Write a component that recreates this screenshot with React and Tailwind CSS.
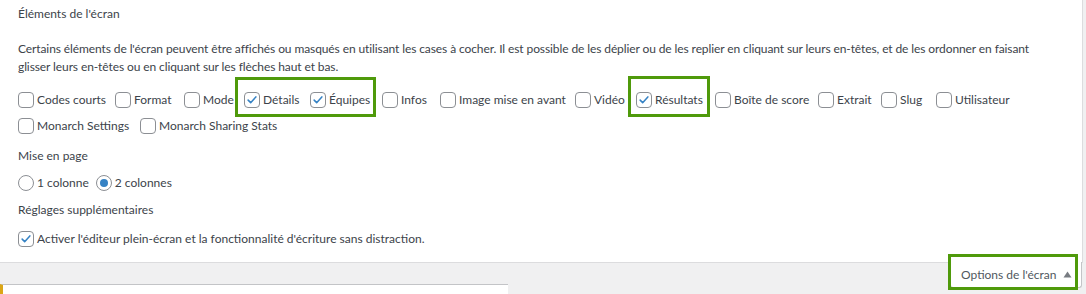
import React from 'react'

const row1 = [
  { label: 'Codes courts', w: 'w-[97px]' },
  { label: 'Format', w: 'w-[69px]' },
  { label: 'Mode', w: 'w-[60px]' },
  { label: 'Détails', w: 'w-[66px]', checked: true },
  { label: 'Équipes', w: 'w-[72px]', checked: true },
  { label: 'Infos', w: 'w-[58px]' },
  { label: 'Image mise en avant', w: 'w-[135px]' },
  { label: 'Vidéo', w: 'w-[61px]' },
  { label: 'Résultats', w: 'w-[79px]', checked: true },
  { label: 'Boîte de score', w: 'w-[103px]' },
  { label: 'Extrait', w: 'w-[63px]' },
  { label: 'Slug', w: 'w-[55px]' },
  { label: 'Utilisateur', w: 'w-[80px]' },
]

const row2 = [
  { label: 'Monarch Settings', w: 'w-[122px]' },
  { label: 'Monarch Sharing Stats', w: 'w-[150px]' },
]

function Box({ checked }) {
  return (
    <span className="w-4 h-4 shrink-0 rounded-[4px] border border-[#8c8f94] bg-white flex items-center justify-center">
      {checked && (
        <svg width="14" height="14" viewBox="0 0 20 20">
          <path d="M4.5 10.2l3.6 3.6 7.4-8.2" fill="none" stroke="#3582c4" strokeWidth="2.2" strokeLinecap="round" strokeLinejoin="round" />
        </svg>
      )}
    </span>
  )
}

function Radio({ checked }) {
  return (
    <span className="w-4 h-4 shrink-0 rounded-full border border-[#8c8f94] bg-white flex items-center justify-center">
      {checked && <span className="w-2 h-2 rounded-full bg-[#3582c4]" />}
    </span>
  )
}

function Item({ label, checked, w }) {
  return (
    <label className={'flex items-center gap-[3px] h-5 whitespace-nowrap shrink-0 ' + (w || '')}>
      <Box checked={checked} />
      <span>{label}</span>
    </label>
  )
}

function Mark({ children, className }) {
  return (
    <span className="relative flex">
      {children}
      <span className={'absolute border-[3px] border-[#4f9a0b] pointer-events-none ' + className} />
    </span>
  )
}

export default function App() {
  return (
    <div className="w-[1086px] h-[294px] overflow-hidden bg-[#f0f0f1] text-[12px] leading-[18px] text-[#3c434a]" style={{ fontFamily: '"Segoe UI", Lato, sans-serif' }}>
      <div className="w-[1083px] h-[263px] bg-white border-r border-b border-[#dcdcde] pl-[18px] pt-[5px]">
        <div>Éléments de l'écran</div>
        <p className="mt-[17px] w-[1030px] tracking-[-0.1px]">
          Certains éléments de l'écran peuvent être affichés ou masqués en utilisant les cases à cocher. Il est possible de les déplier ou de les replier en cliquant sur leurs en-têtes, et de les ordonner en faisant glisser leurs en-têtes ou en cliquant sur les flèches haut et bas.
        </p>
        <div className="mt-[14px] flex items-center">
          {row1.slice(0, 3).map(i => <Item key={i.label} {...i} />)}
          <Mark className="-left-[9px] right-[6px] -top-[13px] -bottom-[7px]">
            {row1.slice(3, 5).map(i => <Item key={i.label} {...i} />)}
          </Mark>
          {row1.slice(5, 8).map(i => <Item key={i.label} {...i} />)}
          <Mark className="-left-[8px] right-[5px] -top-[14px] -bottom-[7px]">
            <Item {...row1[8]} />
          </Mark>
          {row1.slice(9).map(i => <Item key={i.label} {...i} />)}
        </div>
        <div className="mt-[6px] flex items-center">
          {row2.map(i => <Item key={i.label} {...i} />)}
        </div>
        <div className="mt-[11px]">Mise en page</div>
        <div className="mt-[8px] flex items-center gap-[7px]">
          <label className="flex items-center gap-[3px] h-5"><Radio /><span>1 colonne</span></label>
          <label className="flex items-center gap-[3px] h-5"><Radio checked /><span>2 colonnes</span></label>
        </div>
        <div className="mt-[8px]">Réglages supplémentaires</div>
        <div className="mt-[10px]">
          <Item label="Activer l'éditeur plein-écran et la fonctionnalité d'écriture sans distraction." checked />
        </div>
      </div>
      <div className="flex items-start">
        <div className="mt-[21px] w-[508px] h-[20px] bg-white border-t border-[#c3c4c7] border-l-[3px] border-l-[#dba617]" />
        <div className="relative ml-auto mr-[4px] -mt-px w-[132px] bg-white border border-t-0 border-[#c3c4c7] rounded-b-[3px] h-[26px] pl-[10px] pr-[9px] flex items-center justify-between text-[#50575e]">
          <span>Options de l'écran</span>
          <svg width="9" height="7" viewBox="0 0 9 7"><path d="M4.5 0.5L8.5 6.5H0.5Z" fill="#787c82" /></svg>
          <span className="absolute -left-[3px] right-[3px] -top-[8px] -bottom-[3px] border-[3px] border-[#4f9a0b]" />
        </div>
      </div>
    </div>
  )
}
